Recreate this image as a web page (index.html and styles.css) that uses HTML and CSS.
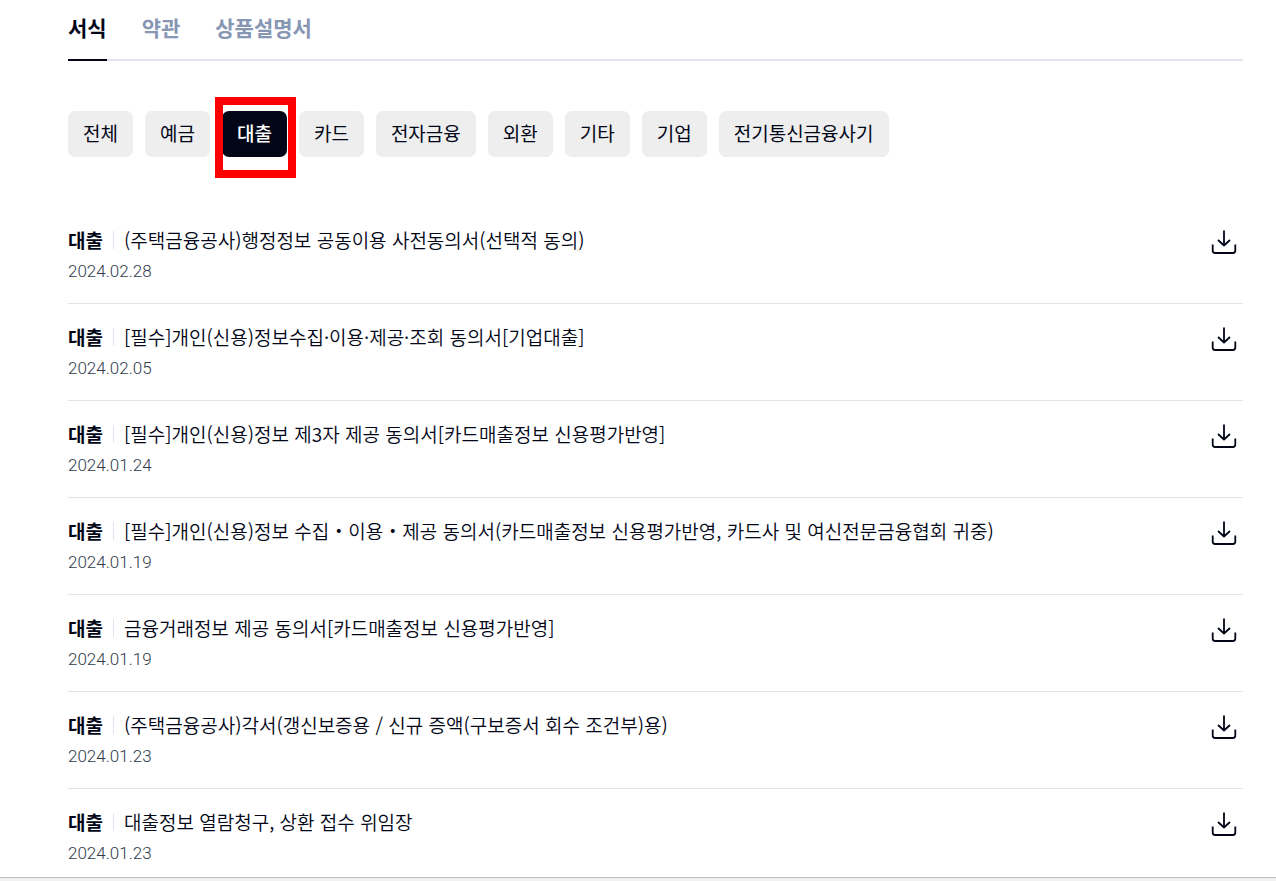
FILE: index.html
```html
<!DOCTYPE html>
<html lang="ko">
<head>
<meta charset="utf-8">
<meta name="viewport" content="width=device-width, initial-scale=1">
<title>서식</title>
<link rel="stylesheet" href="styles.css">
</head>
<body>
<svg class="sprite" aria-hidden="true">
  <symbol id="download" viewBox="0 0 26 26">
    <path d="M13 1.500v15M7 11l6 5.500 6-5.500M1.700 15.500v6q0 2.500 2.500 2.500h17.600q2.500 0 2.500-2.500v-6"/>
  </symbol>
</svg>
<main class="page">
  <nav class="tabs">
    <a class="tab tab-active" href="#">서식</a>
    <a class="tab" href="#">약관</a>
    <a class="tab" href="#">상품설명서</a>
  </nav>
  <div class="filters">
    <button class="filter" type="button">전체</button>
    <button class="filter" type="button">예금</button>
    <button class="filter filter-active" type="button">대출</button>
    <button class="filter" type="button">카드</button>
    <button class="filter" type="button">전자금융</button>
    <button class="filter" type="button">외환</button>
    <button class="filter" type="button">기타</button>
    <button class="filter" type="button">기업</button>
    <button class="filter" type="button">전기통신금융사기</button>
  </div>
  <ul class="list">
    <li class="row">
      <div class="info"><div class="title"><strong class="kind">대출</strong><a class="name" href="#">(주택금융공사)행정정보 공동이용 사전동의서(선택적 동의)</a></div><time class="date">2024.02.28</time></div>
      <button class="download" type="button" aria-label="다운로드"><svg class="icon"><use href="#download"/></svg></button>
    </li>
    <li class="row">
      <div class="info"><div class="title"><strong class="kind">대출</strong><a class="name" href="#">[필수]개인(신용)정보수집·이용·제공·조회 동의서[기업대출]</a></div><time class="date">2024.02.05</time></div>
      <button class="download" type="button" aria-label="다운로드"><svg class="icon"><use href="#download"/></svg></button>
    </li>
    <li class="row">
      <div class="info"><div class="title"><strong class="kind">대출</strong><a class="name" href="#">[필수]개인(신용)정보 제3자 제공 동의서[카드매출정보 신용평가반영]</a></div><time class="date">2024.01.24</time></div>
      <button class="download" type="button" aria-label="다운로드"><svg class="icon"><use href="#download"/></svg></button>
    </li>
    <li class="row">
      <div class="info"><div class="title"><strong class="kind">대출</strong><a class="name" href="#">[필수]개인(신용)정보 수집・이용・제공 동의서(카드매출정보 신용평가반영, 카드사 및 여신전문금융협회 귀중)</a></div><time class="date">2024.01.19</time></div>
      <button class="download" type="button" aria-label="다운로드"><svg class="icon"><use href="#download"/></svg></button>
    </li>
    <li class="row">
      <div class="info"><div class="title"><strong class="kind">대출</strong><a class="name" href="#">금융거래정보 제공 동의서[카드매출정보 신용평가반영]</a></div><time class="date">2024.01.19</time></div>
      <button class="download" type="button" aria-label="다운로드"><svg class="icon"><use href="#download"/></svg></button>
    </li>
    <li class="row">
      <div class="info"><div class="title"><strong class="kind">대출</strong><a class="name" href="#">(주택금융공사)각서(갱신보증용 / 신규 증액(구보증서 회수 조건부)용)</a></div><time class="date">2024.01.23</time></div>
      <button class="download" type="button" aria-label="다운로드"><svg class="icon"><use href="#download"/></svg></button>
    </li>
    <li class="row">
      <div class="info"><div class="title"><strong class="kind">대출</strong><a class="name" href="#">대출정보 열람청구, 상환 접수 위임장</a></div><time class="date">2024.01.23</time></div>
      <button class="download" type="button" aria-label="다운로드"><svg class="icon"><use href="#download"/></svg></button>
    </li>
  </ul>
</main>
<footer class="bottom-bar"></footer>
</body>
</html>
```
FILE: styles.css
```css
* {
  box-sizing: border-box;
}

body {
  margin: 0;
  min-height: 100vh;
  display: flex;
  flex-direction: column;
  background: #fff;
  color: #020617;
  font-family: "Noto Sans CJK KR", sans-serif;
}

.sprite {
  display: none;
}

.page {
  flex: 1;
  padding: 0 33px 0 68px;
}

.tabs {
  display: flex;
  gap: 35px;
  border-bottom: 2px solid #dfe3f2;
}

.tab {
  padding: 12px 0 16px;
  margin-bottom: -2px;
  border-bottom: 2px solid transparent;
  color: #8796b3;
  font-size: 21px;
  line-height: 31px;
  font-weight: 700;
  text-decoration: none;
}

.tab-active {
  border-color: #020617;
  color: #020617;
}

.filters {
  display: flex;
  flex-wrap: wrap;
  gap: 12px;
  padding: 50px 0;
}

.filter {
  padding: 8px 15px 10px;
  border: 0;
  border-radius: 7px;
  background: #eee;
  color: #020617;
  font-family: inherit;
  font-size: 19px;
  line-height: 28px;
}

.filter-active {
  background: #020617;
  color: #fff;
  font-weight: 500;
  position: relative;
}

.filter-active::after {
  content: "";
  position: absolute;
  top: -14px;
  right: -9px;
  bottom: -21px;
  left: -7px;
  border: 8px solid #f00;
}

.list {
  margin: 0;
  padding: 0;
  list-style: none;
}

.row {
  display: flex;
  align-items: flex-start;
  justify-content: space-between;
  padding: 19px 6px 17px 0;
  border-bottom: 1px solid #e1e4e9;
}

.row:last-child {
  padding-bottom: 9px;
  border-bottom: 0;
}

.title {
  display: flex;
  align-items: center;
  font-size: 19px;
  line-height: 28px;
}

.kind {
  font-weight: 700;
}

.name {
  display: flex;
  align-items: center;
  color: inherit;
  font-family: "Noto Sans CJK KR DemiLight", "Noto Sans CJK KR", sans-serif;
  font-weight: 350;
  text-decoration: none;
}

.name::before {
  content: "";
  width: 1px;
  height: 18px;
  margin: 0 10px;
  background: #dfe3f2;
}

.date {
  display: block;
  padding-top: 2px;
  color: #303b4b;
  font-family: Roboto, "Noto Sans CJK KR", sans-serif;
  font-size: 17px;
  line-height: 30px;
  font-weight: 300;
}

.download {
  display: flex;
  padding: 3px 0 0;
  border: 0;
  background: none;
  color: #020617;
}

.icon {
  width: 26px;
  height: 26px;
  fill: none;
  stroke: currentColor;
  stroke-width: 1.8;
  stroke-linejoin: round;
}

.bottom-bar {
  height: 4px;
  border-top: 1px solid #bdbdbd;
  background: #f0f0f0;
}
```
